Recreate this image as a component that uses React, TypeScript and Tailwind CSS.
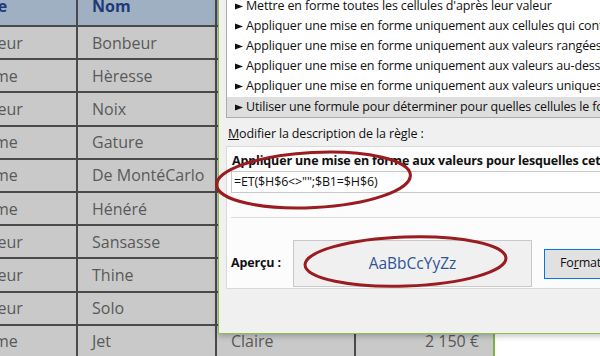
const rows: { civ: string; nom: string }[] = [
  { civ: "Monsieur", nom: "Bonbeur" },
  { civ: "Madame", nom: "Hèresse" },
  { civ: "Monsieur", nom: "Noix" },
  { civ: "Madame", nom: "Gature" },
  { civ: "Madame", nom: "De MontéCarlo" },
  { civ: "Madame", nom: "Hénéré" },
  { civ: "Monsieur", nom: "Sansasse" },
  { civ: "Monsieur", nom: "Thine" },
  { civ: "Monsieur", nom: "Solo" },
  { civ: "Madame", nom: "Jet" },
];

const ruleTypes = [
  "Mettre en forme toutes les cellules d'après leur valeur",
  "Appliquer une mise en forme uniquement aux cellules qui contiennent",
  "Appliquer une mise en forme uniquement aux valeurs rangées parmi les premières ou les dernières valeurs",
  "Appliquer une mise en forme uniquement aux valeurs au-dessus ou en dessous de la moyenne",
  "Appliquer une mise en forme uniquement aux valeurs uniques ou aux doublons",
  "Utiliser une formule pour déterminer pour quelles cellules le format sera appliqué",
];

function Pointer() {
  return (
    <svg width="8" height="7" viewBox="0 0 8 7" className="shrink-0">
      <polygon points="0,0.5 8,3.5 0,6.5" fill="#111" />
    </svg>
  );
}

function Sheet() {
  const cell = "border-r-2 border-b-2 border-[#4a4a4a] bg-[#c9c9c9] flex items-center overflow-hidden whitespace-nowrap";
  const head = "border-r-2 border-b-2 border-[#4a4a4a] bg-[#9fb0c2] flex items-center overflow-hidden font-bold text-[#1f3a78]";
  return (
    <div className="grid grid-cols-[78px_139px_139px_139px] grid-rows-[41px_repeat(10,33.2px)] mt-[-14px] font-['Open_Sans',sans-serif] text-[16px] text-[#595959]">
      <div className={head}>
        <span className="ml-[-48px]">Civilite</span>
      </div>
      <div className={`${head} pl-[14px]`}>Nom</div>
      <div className={head} />
      <div className={head} />
      {rows.map((r, i) => {
        const last = i === rows.length - 1;
        return [
          <div key={`a${i}`} className={cell}>
            <span className="ml-[-48px]">{r.civ}</span>
          </div>,
          <div key={`b${i}`} className={`${cell} pl-[14px]`}>
            {r.nom}
          </div>,
          <div key={`c${i}`} className={`${cell} pl-[14px]`}>
            {last ? "Claire" : ""}
          </div>,
          <div key={`d${i}`} className={`${cell} justify-end pr-[14px] border-r-[#7cb342]`}>
            {last ? "2 150 €" : ""}
          </div>,
        ];
      })}
    </div>
  );
}

function RuleDialog() {
  return (
    <div className="absolute left-[218px] top-[-20px] w-[400px] h-[354px] border border-[#8bc34a] bg-[#f0f0f0] shadow-[0_2px_6px_rgba(0,0,0,0.25)] pl-[7px] font-['Open_Sans',sans-serif] text-[12.5px] tracking-[-0.15px] text-[#111] overflow-hidden">
      {/* Type de règle */}
      <div className="mt-[13px] border border-[#acacac] bg-white pt-[1px] whitespace-nowrap">
        {ruleTypes.map((t, i) => (
          <div
            key={t}
            className={`h-[20.2px] flex items-center gap-[3px] pl-[8px] ${i === ruleTypes.length - 1 ? "bg-[#dedede]" : ""}`}
          >
            <Pointer />
            <span>{t}</span>
          </div>
        ))}
      </div>

      <div className="mt-[6px] h-[20px] flex items-center pl-[2px]">
        <span className="underline">M</span>odifier la description de la règle :
      </div>

      {/* Description de la règle */}
      <div className="mt-[2px] h-[143px] border border-[#d9d9d9] bg-[#fcfcfc] whitespace-nowrap">
        <div className="mt-[4px] h-[20px] flex items-center pl-[5px] font-bold">
          Appliquer une mise en forme aux valeurs pour lesquelles cette formule est vraie :
        </div>
        <div className="ml-[4px] h-[22px] border border-[#c8c8c8] bg-white flex items-center pl-[2px]">
          =ET($H$6&lt;&gt;"";$B1=$H$6)
        </div>
        <div className="ml-[4px] mt-[24px] h-px bg-[#dcdcdc]" />
        <div className="mt-[22px] ml-[4px] flex items-center">
          <span className="w-[62px] shrink-0 font-bold">Aperçu :</span>
          <div className="w-[239px] h-[47px] shrink-0 border border-[#c8c8c8] bg-[#f0f0f0] flex items-center justify-center text-[15.5px] tracking-normal text-[#2f5597]">
            AaBbCcYyZz
          </div>
          <button className="ml-[12px] w-[90px] h-[30px] shrink-0 border border-[#0078d7] bg-[#e1e1e1] text-left pl-[15px]">
            Fo<span className="underline">r</span>mat...
          </button>
        </div>
      </div>
    </div>
  );
}

export default function App() {
  return (
    <div className="relative w-[600px] h-[356px] overflow-hidden bg-white">
      <Sheet />
      <RuleDialog />
      <svg className="absolute inset-0 pointer-events-none" width="600" height="356">
        <ellipse cx="313.5" cy="180" rx="97" ry="27.5" fill="none" stroke="#9b1c20" strokeWidth="3" transform="rotate(-3 313.5 180)" />
        <ellipse cx="405.5" cy="261.5" rx="100.5" ry="24.5" fill="none" stroke="#9b1c20" strokeWidth="3" transform="rotate(-2 405.5 261.5)" />
      </svg>
    </div>
  );
}
